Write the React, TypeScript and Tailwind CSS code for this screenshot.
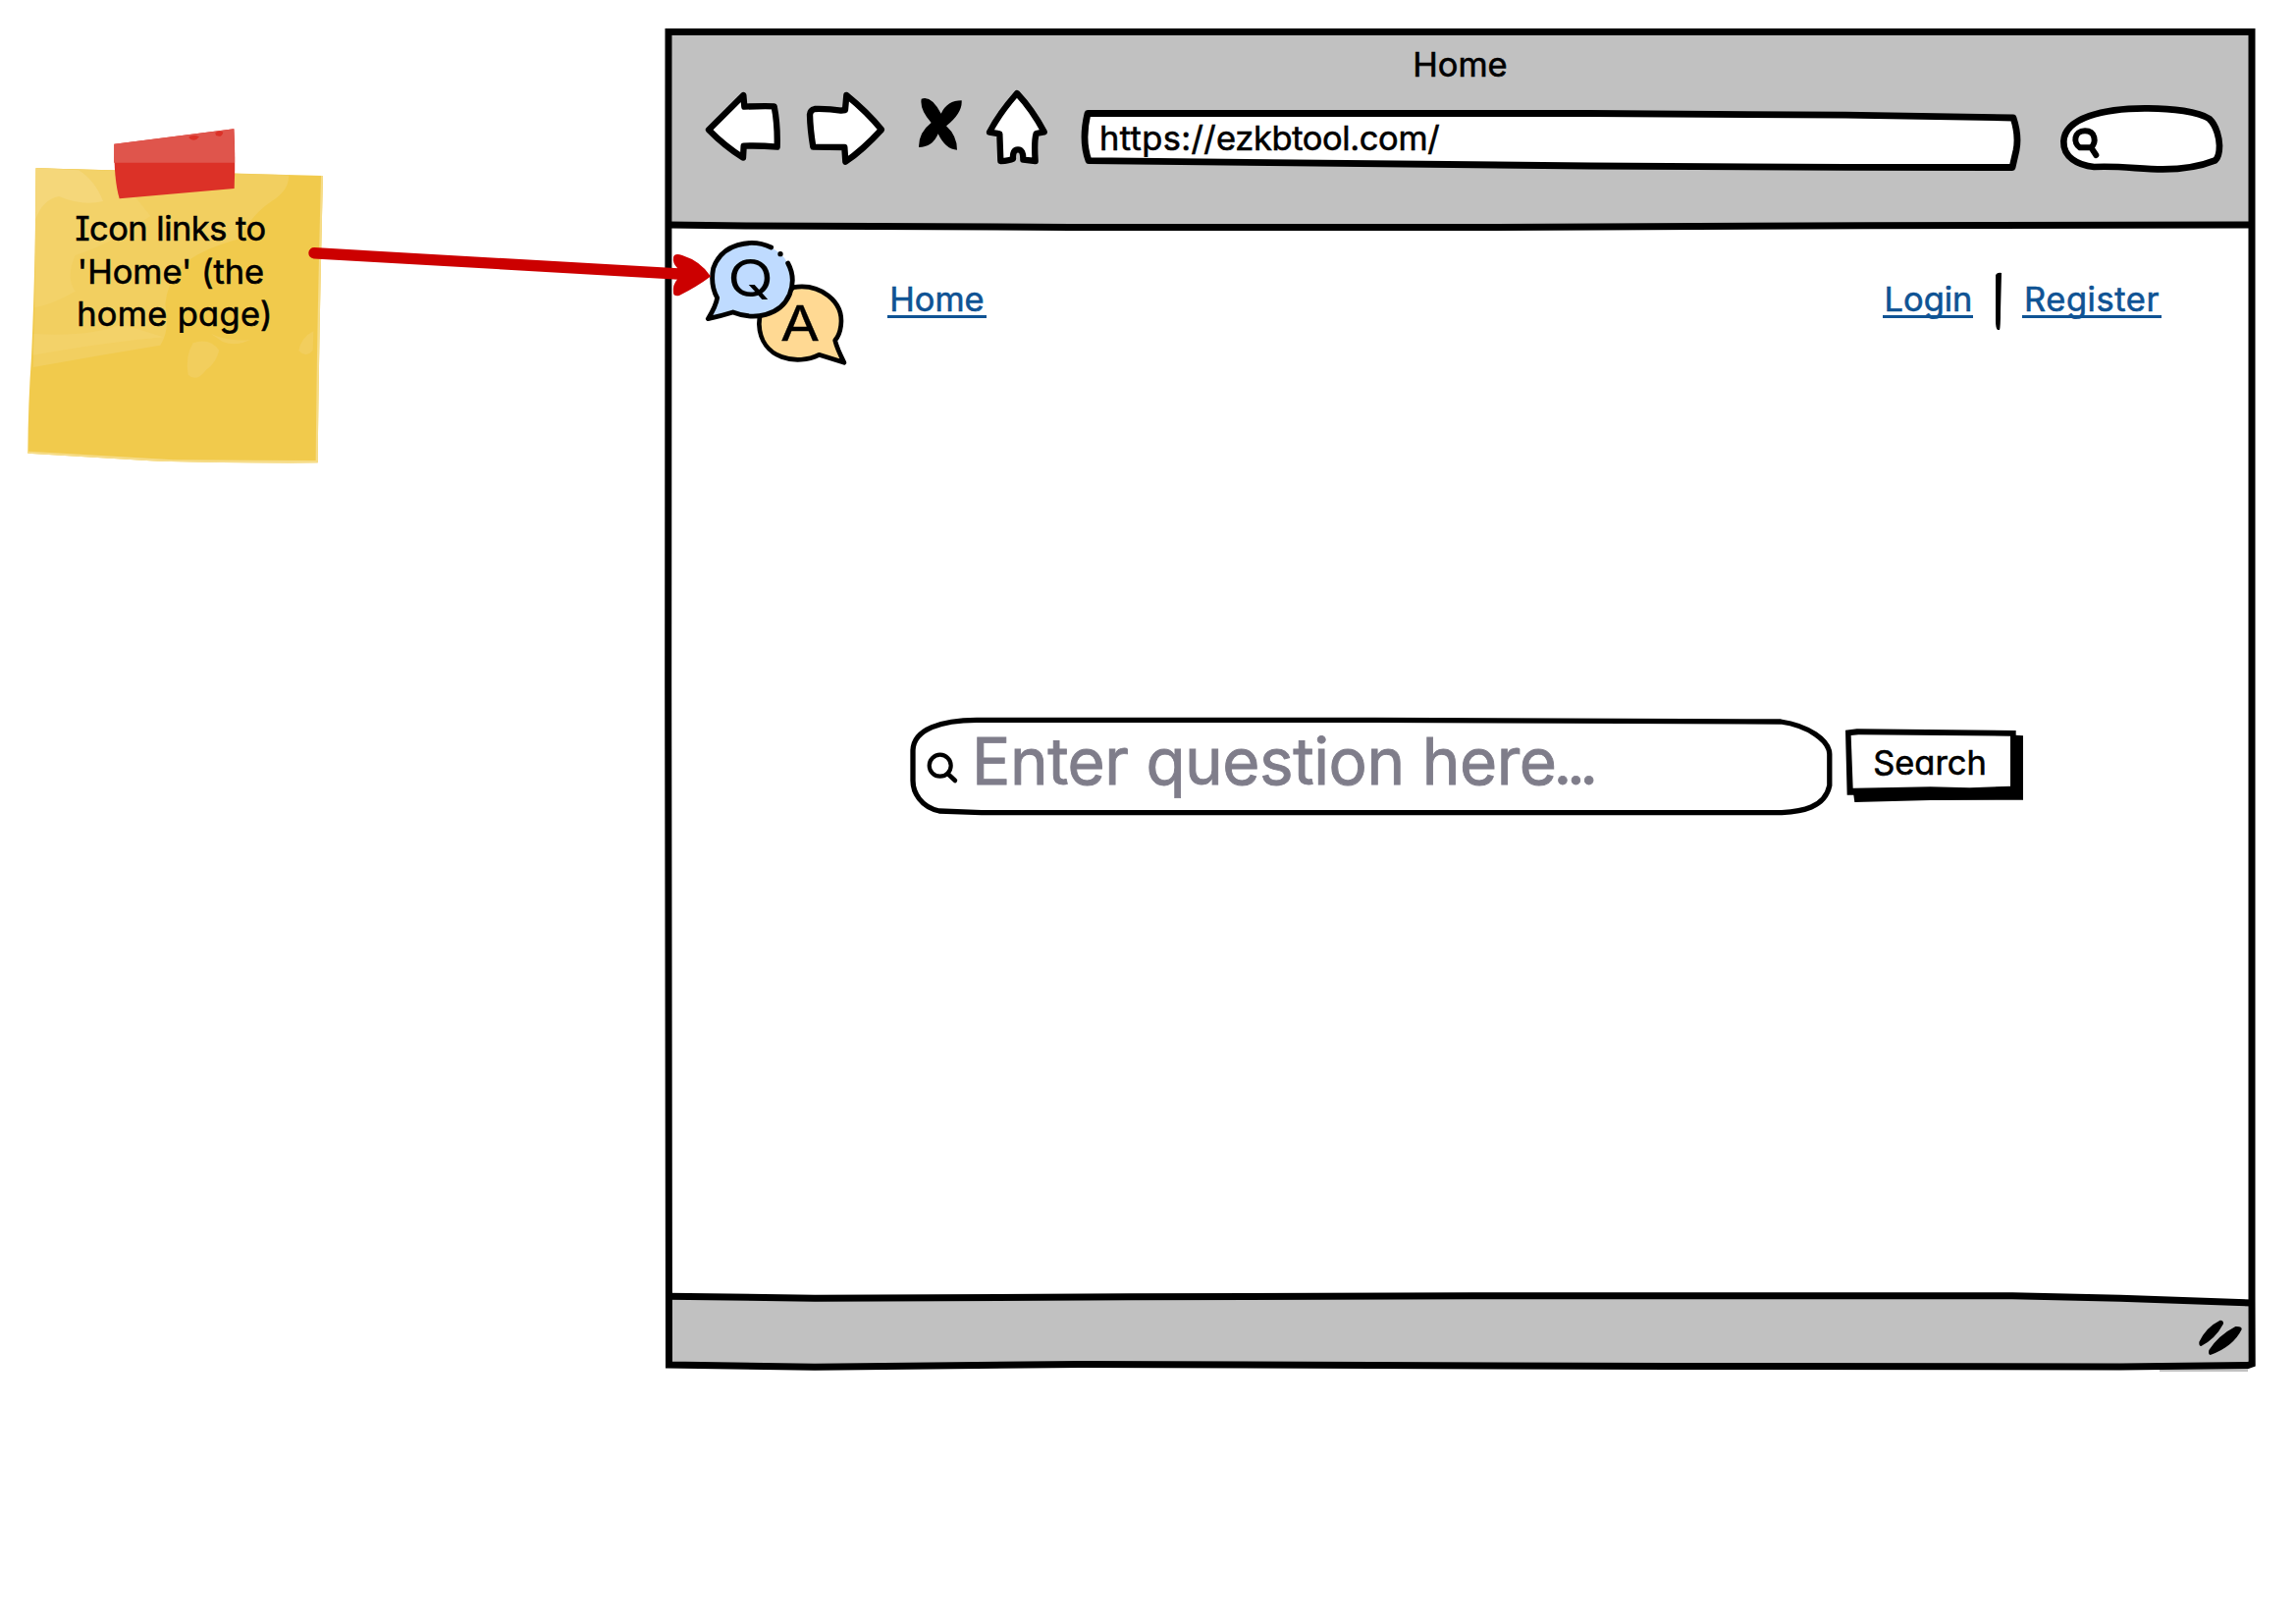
import React from "react";

function StickyNote() {
  return (
    <div className="relative ml-[10px] mt-[110px] h-[380px] w-[340px]">
      <svg className="absolute inset-0" width="340" height="380" viewBox="0 0 1020 1140">
        <path d="M80 184 L957 207 Q945 700 941 1084 Q600 1085 430 1078 L55 1055 Q56 900 66 760 Q78 500 80 184Z" fill="#f1ca4c" />
        <path d="M80 184 L852 205 Q855 250 800 285 Q740 325 700 400 Q560 440 520 490 Q480 540 475 600 Q490 680 460 725 L280 755 L72 792 Q80 500 80 184Z" fill="#f2cf60" />
        <path d="M80 184 L320 192 L430 330 Q300 420 200 450 Q170 520 200 560 Q130 600 76 610 Z" fill="#f3d269" />
        <path d="M80 184 L210 190 Q260 220 285 285 Q220 300 150 270 Q100 280 79 340Z" fill="#f5d77a" />
        <path d="M74 690 Q250 700 340 660 L470 700 Q300 715 72 755Z" fill="#f3d269" />
        <path d="M560 718 Q610 700 640 740 Q630 780 600 800 Q570 840 545 815 Q535 760 560 718Z" fill="#f2ce5d" />
        <path d="M615 690 Q670 715 735 708 Q690 730 650 714Z" fill="#f2ce5d" />
        <path d="M928 682 Q890 700 883 742 Q905 765 926 740Z" fill="#f2ce5d" />
        <path d="M430 1078 Q600 1085 941 1084 Q945 700 957 207 L951 207 Q938 700 935 1077 L500 1075 L57 1049 L55 1055Z" fill="#f6dc88" />
        <path d="M319 110 L685 64 Q690 150 686 246 L335 277 Q318 220 319 110Z" fill="#dc3127" />
        <path d="M319 110 L685 64 Q688 120 687 167 L318 167Z" fill="#df554c" />
        <path d="M548 87 Q565 80 579 88 Q565 106 548 92Z M628 76 Q640 66 652 74 Q648 92 630 84Z" fill="#dc3127" />
      </svg>
      <div className="relative w-[328px] pt-[101px] text-center text-[34.4px] leading-[43.5px] text-black">
        <div className="-ml-[1px] tracking-[-0.5px]">Icon links to</div>
        <div>'Home' (the</div>
        <div className="pl-[8px] tracking-[0.35px]">home page)</div>
      </div>
    </div>
  );
}

function NoteArrow() {
  return (
    <svg className="absolute left-[300px] top-[230px]" width="440" height="100" viewBox="300 230 440 100">
      <path d="M320 257.8 L700 279.5" stroke="#cc0000" strokeWidth="11.4" strokeLinecap="round" fill="none" />
      <path d="M686 262 Q687 257.500 695 260 Q714 266 724 281.500 Q710 292 692 301 Q686 302 686 298 Q685 290 690 284.500 L690 273 Q685 268 686 262Z" fill="#cc0000" />
    </svg>
  );
}

function WindowFrame() {
  return (
    <svg className="absolute inset-0" width="1621" height="1370" viewBox="677 29 1621 1370">
      <path d="M681 32 H2294 V229 L1400 231.500 L1090 231.500 L681 229Z" fill="#c1c1c1" />
      <path d="M681 1320.500 L850 1322.500 L1500 1320 L2050 1320 L2294 1327 V1391 H681Z" fill="#c1c1c1" />
      <path d="M2200 1395.500 H2290" stroke="#c1c1c1" strokeWidth="3" />
      <g fill="none" stroke="#000" strokeWidth="7">
        <path d="M681 32.500 L2294 32.500 L2294 1320 L2294.200 1389 L2290 1390.500 L2160 1392 L1700 1391.500 L1100 1389.500 L830 1392.200 L681.500 1390 L680.700 700 Z" />
        <path d="M681 229 L760 230 L1090 231.400 L1500 231.500 L1900 229.800 L2294 229" />
        <path d="M681 1320.300 L830 1322.200 L1150 1320.800 L1500 1319.700 L2050 1319.700 L2160 1322.300 L2294 1327" />
      </g>
    </svg>
  );
}

function BackIcon() {
  return (
    <svg className="mt-[2px] shrink-0" width="81" height="74" viewBox="141 231 243 222">
      <path d="M156 352 L262 246 L265 281 Q330 278 356 280 Q367 335 365 404 Q310 399 263 401 L261 437 Q205 402 156 352Z" fill="#fff" stroke="#000" strokeWidth="19" strokeLinejoin="round" />
    </svg>
  );
}

function ForwardIcon() {
  return (
    <svg className="ml-[22px] mt-[2px] shrink-0" width="83" height="78" viewBox="450 231 249 234">
      <path d="M475 404 Q466 350 465 305 Q466 291 480 288 Q525 287 560 293 L573 291 L577 246 Q640 297 684 351 Q625 415 574 449 L571 405Z" fill="#fff" stroke="#000" strokeWidth="19" strokeLinejoin="round" />
    </svg>
  );
}

function StopIcon() {
  return (
    <svg className="ml-[32px] mt-[8px] shrink-0" width="46" height="56" viewBox="795 249 138 168">
      <path d="M806 257 Q836 245 866 302 Q885 262 929 262 Q932 300 882 340 Q915 370 915 413 Q880 412 857 364 Q840 405 798 405 Q797 360 836 330 Q800 290 806 257Z" fill="#000" />
    </svg>
  );
}

function HomeIcon() {
  return (
    <svg className="ml-[22px] shrink-0" width="66" height="80" viewBox="999 225 198 240">
      <path d="M1098 240 Q1145 290 1181 358 L1157 363 Q1150 385 1154 447 L1117 443 Q1118 412 1101 412 Q1084 412 1086 440 Q1075 446 1048 447 L1045 364 L1014 359 Q1045 300 1098 240Z" fill="#fff" stroke="#000" strokeWidth="19" strokeLinejoin="round" />
    </svg>
  );
}

function AddressBar() {
  return (
    <div className="relative ml-[29px] mt-[19px] h-[68px] w-[963px] shrink-0">
      <svg className="absolute inset-0" width="963" height="68" viewBox="1098 109 963 68">
        <path d="M1108 115.500 L1620 115.500 L1880 117.200 L2051 120 Q2057 138 2054 153 L2050 170.500 L1880 170.300 L1620 169 L1109 163.700 Q1101.500 143 1108 115.500Z" fill="#fff" stroke="#000" strokeWidth="6.800" strokeLinejoin="round" />
      </svg>
      <span className="relative block whitespace-nowrap pl-[22px] text-[34.4px] leading-[64px] tracking-[-0.35px]">
        <span className="tracking-[0.4px]">https://</span>ezkbtool.com/
      </span>
    </div>
  );
}

function BrowserSearch() {
  return (
    <svg className="ml-[36px] mt-[15px] shrink-0" width="170" height="73" viewBox="651 255 510 219">
      <path d="M667 372 C670 300 790 271 915 271 C1000 270 1080 282 1112 303 C1135 325 1143 365 1143 385 Q1143 420 1130 430 C1080 450 1020 457 970 457 C900 457 840 446 760 450 C710 445 665 420 667 372Z" fill="#fff" stroke="#000" strokeWidth="20" strokeLinejoin="round" />
      <path d="M717 391 C695 378 698 340 732 340 C765 340 767 375 751 391 Z M751 391 L766 414" fill="none" stroke="#000" strokeWidth="18" strokeLinecap="round" strokeLinejoin="round" />
    </svg>
  );
}

function Logo() {
  return (
    <svg className="shrink-0" width="147" height="131" viewBox="111 54 441 393">
      <path d="M385 203 C465 190 540 245 530 320 Q526 350 512 365 Q518 390 540 433 L463 409 C400 442 284 425 280 315 L282 290Z" fill="#ffd993" stroke="#000" strokeWidth="14" strokeLinejoin="round" />
      <path d="M124 299 Q165 290 200 279 C265 305 345 290 373 225 C405 140 340 68 258 68 C165 66 125 145 138 195 Q142 220 152 235 L142 265Z" fill="#bfdbff" />
      <path d="M317 81 C255 52 165 70 140 145 Q130 195 152 235 Q148 260 124 299 Q165 290 200 279 C265 305 345 290 373 225 Q393 175 368 129" fill="none" stroke="#000" strokeWidth="14.500" strokeLinejoin="round" strokeLinecap="round" />
      <circle cx="345" cy="101" r="8" fill="#000" />
      <text transform="translate(254 230) scale(1.18 1)" textAnchor="middle" fontSize="155" fontFamily="Inter" fill="#000">Q</text>
      <text transform="translate(405 366) scale(1.18 1)" textAnchor="middle" fontSize="148" fontFamily="Inter" fill="#000" stroke="#000" strokeWidth="1" strokeLinejoin="round">A</text>
    </svg>
  );
}

const linkClass = "block h-[37px] border-b-[3px] border-[#0f5394] text-center leading-[35px] whitespace-nowrap text-[#0f5394]";

function SiteNav() {
  return (
    <nav className="flex h-[495px] items-start pl-[40px] pr-[96px] pt-[12px] text-[34.4px]">
      <Logo />
      <a className={linkClass + " ml-[40px] mt-[44px] w-[101px]"}>Home</a>
      <a className={linkClass + " ml-auto mt-[44px] w-[92px] pl-[1px]"}>Login</a>
      <svg className="ml-[22px] mt-[34px] shrink-0" width="8" height="60" viewBox="0 0 8 60">
        <path d="M1 3 Q3 0 7 1 L6 40 Q6 56 5 59 L3 59 Q1 57 1 50Z" fill="#000" />
      </svg>
      <a className={linkClass + " ml-[20px] mt-[44px] w-[142px] tracking-[0.6px]"}>Register</a>
    </nav>
  );
}

function QuestionSearch() {
  return (
    <div className="flex items-start pl-[247px]">
      <div className="relative h-[108px] w-[946px]">
        <svg className="absolute inset-0" width="946" height="108" viewBox="924 726 946 108">
          <path d="M930 765 C930 742 960 733.500 995 733.300 L1400 733.300 L1814 735 C1842 739 1863.500 754 1863.800 768 L1863.800 800 C1859 823 1835 826.500 1815 827.700 L1000 827.700 L957 826 C938 822 930 807 930 795Z" fill="#fff" stroke="#000" strokeWidth="5.300" />
          <circle cx="957.700" cy="779.700" r="11" fill="none" stroke="#000" strokeWidth="4.200" />
          <path d="M965.500 788 L973 795" stroke="#000" strokeWidth="4.500" strokeLinecap="round" />
        </svg>
        <span className="relative block pl-[66px] text-[65.5px] leading-[100px] whitespace-nowrap tracking-[-0.45px] text-[#7f7d8a] [-webkit-text-stroke:0.9px_#7f7d8a]">
          Enter question here<span className="-ml-[3px] tracking-[-5.5px]">...</span>
        </span>
      </div>
      <button className="relative ml-[6px] mt-[12px] h-[84px] w-[189px] pr-[9px] text-center text-[34.4px]">
        <svg className="absolute inset-0" width="189" height="84" viewBox="288 84 567 252">
          <path d="M300 101 L335 97 L821 102 V116 L843 118 V314 L560 315 L328 321 L325 299 H305Z" fill="#000" />
          <path d="M317 117 L340 115 L804 119 V272 L680 277 L560 274 L323 278Z" fill="#fff" />
        </svg>
        <span className="relative block h-[84px] leading-[77px]">Search</span>
      </button>
    </div>
  );
}

function BrowserWindow() {
  return (
    <section className="relative mt-[29px] flex h-[1367px] w-[1621px] shrink-0 flex-col">
      <WindowFrame />
      <header className="relative h-[202px] pt-[16px]">
        <h1 className="h-[45px] text-center text-[34.4px] leading-[42px]">Home</h1>
        <div className="flex items-start pl-[40px]">
          <BackIcon />
          <ForwardIcon />
          <StopIcon />
          <HomeIcon />
          <AddressBar />
          <BrowserSearch />
        </div>
      </header>
      <main className="relative flex-1">
        <SiteNav />
        <QuestionSearch />
      </main>
      <footer className="relative flex h-[74px] items-start justify-end pr-[12px] pt-[20px]">
        <svg width="48" height="40" viewBox="234 156 144 120">
          <path d="M305 164 Q316 163 315 175 Q290 222 247 243 Q240 243 241 230 Q262 185 305 164Z M352 183 Q373 182 371 192 Q345 245 275 270 Q268 268 271 255 Q300 210 352 183Z" fill="#000" />
        </svg>
      </footer>
    </section>
  );
}

export default function App() {
  return (
    <div className="relative flex h-[1654px] w-[2339px] items-start overflow-hidden bg-white font-['Inter','Open_Sans',sans-serif] text-black [-webkit-text-stroke:0.6px_currentColor] [font-feature-settings:'cv08','cv11']">
      <aside className="w-[677px] shrink-0">
        <StickyNote />
      </aside>
      <BrowserWindow />
      <NoteArrow />
    </div>
  );
}
